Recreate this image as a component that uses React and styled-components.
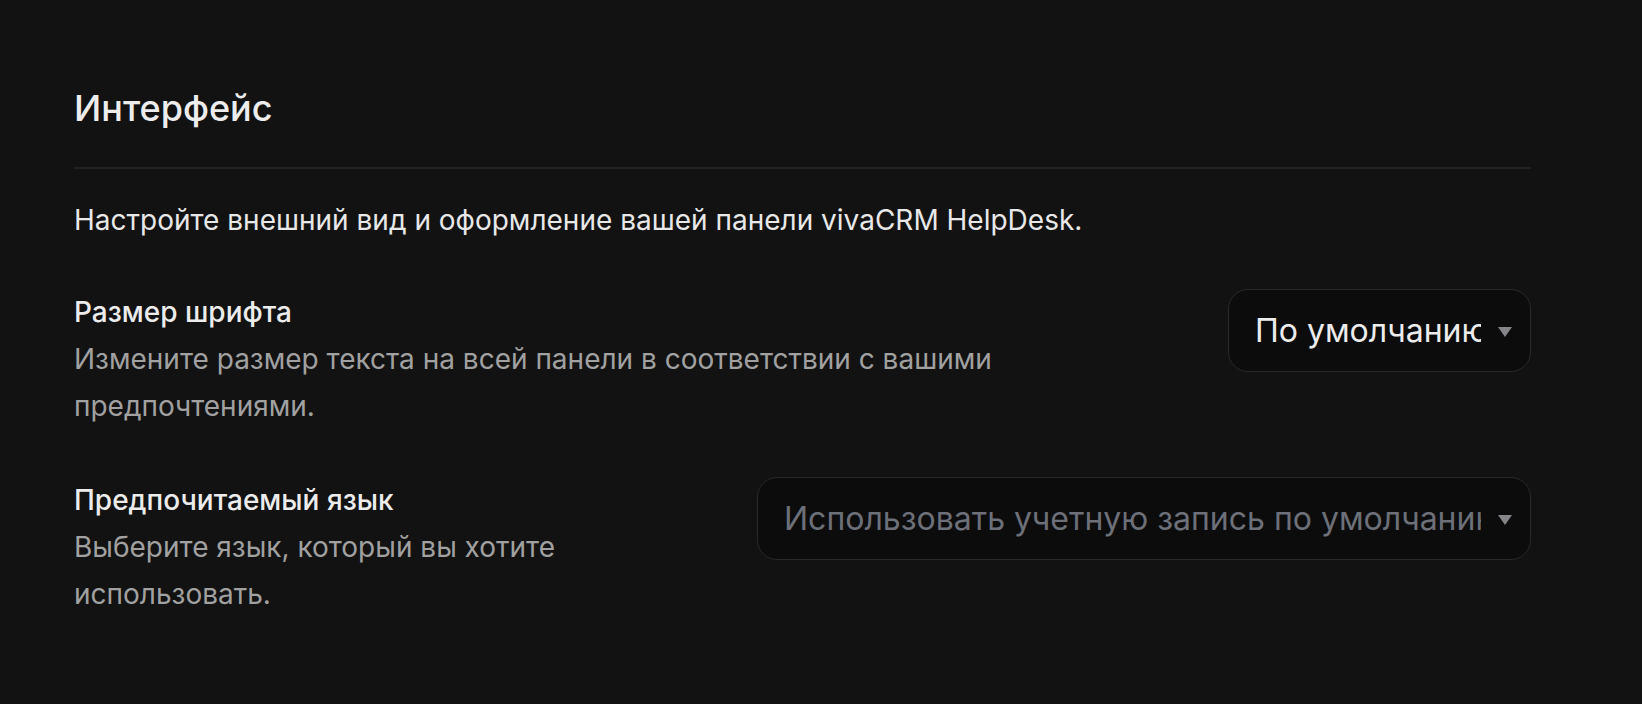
import React from "react";
import styled, { createGlobalStyle } from "styled-components";

const Global = createGlobalStyle`
  html, body {
    margin: 0;
    padding: 0;
    background: #121212;
  }
  body {
    font-family: Inter, "Noto Sans", sans-serif;
    -webkit-font-smoothing: antialiased;
  }
`;

const Page = styled.main`
  min-height: 704px;
  box-sizing: border-box;
  padding: 86px 111px 40px 74px;
  background: #121212;
  color: #ececec;
`;

const Title = styled.h1`
  margin: 0;
  font-size: 36px;
  line-height: 44px;
  font-weight: 500;
  color: #ededed;
`;

const Divider = styled.hr`
  margin: 37px 0 28px;
  border: 0;
  height: 2px;
  background: #222225;
`;

const Intro = styled.p`
  margin: 0 0 45px;
  font-size: 28px;
  line-height: 47px;
  color: #e8e8e8;
`;

const Settings = styled.div`
  display: flex;
  flex-direction: column;
  gap: 47px;
`;

const Row = styled.div`
  display: flex;
  align-items: flex-start;
  justify-content: space-between;
  gap: 64px;
`;

const TextCol = styled.div`
  flex: 1;
  min-width: 0;
  max-width: 940px;
`;

const Label = styled.div`
  font-size: 28px;
  line-height: 47px;
  font-weight: 500;
  color: #ececec;
`;

const Hint = styled.div`
  font-size: 28px;
  line-height: 47px;
  color: #a1a1a1;
`;

const SelectBox = styled.button`
  flex: 0 0 auto;
  width: ${(p) => p.$width}px;
  height: 83px;
  box-sizing: border-box;
  display: flex;
  align-items: center;
  gap: 17px;
  padding: 0 18px 0 26px;
  background: #0c0c0d;
  border: 1.5px solid #29292d;
  border-radius: 20px;
  font-family: Inter, "Noto Sans", sans-serif;
  cursor: pointer;
`;

const Value = styled.span`
  flex: 1;
  min-width: 0;
  overflow: hidden;
  white-space: nowrap;
  text-align: left;
  font-size: 32px;
  line-height: 40px;
  color: ${(p) => (p.$placeholder ? "#6d7078" : "#ececec")};
`;

const Caret = styled.span`
  flex: 0 0 auto;
  width: 0;
  height: 0;
  border-left: 7px solid transparent;
  border-right: 7px solid transparent;
  border-top: 10px solid #85858a;
  margin-top: 2px;
`;

function Select({ width, value, placeholder }) {
  return (
    <SelectBox $width={width} type="button">
      <Value $placeholder={!value}>{value || placeholder}</Value>
      <Caret />
    </SelectBox>
  );
}

export default function App() {
  return (
    <>
      <Global />
      <Page>
        <Title>Интерфейс</Title>
        <Divider />
        <Intro>Настройте внешний вид и оформление вашей панели vivaCRM HelpDesk.</Intro>
        <Settings>
          <Row>
            <TextCol>
              <Label>Размер шрифта</Label>
              <Hint>
                Измените размер текста на всей панели в соответствии с вашими предпочтениями.
              </Hint>
            </TextCol>
            <Select width={303} value="По умолчанию" />
          </Row>
          <Row>
            <TextCol>
              <Label>Предпочитаемый язык</Label>
              <Hint>Выберите язык, который вы хотите использовать.</Hint>
            </TextCol>
            <Select width={774} placeholder="Использовать учетную запись по умолчанию" />
          </Row>
        </Settings>
      </Page>
    </>
  );
}
